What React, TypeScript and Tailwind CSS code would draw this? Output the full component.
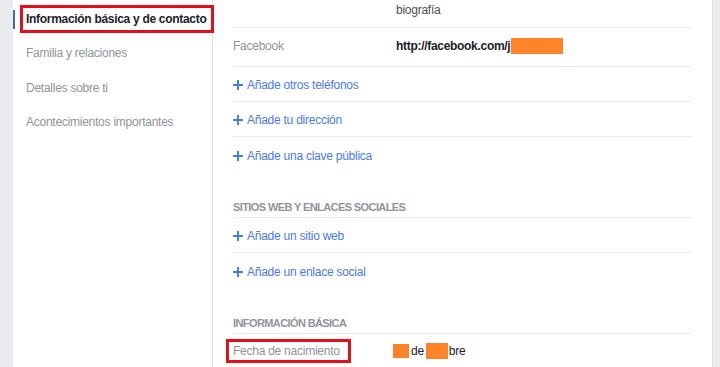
const font = { fontFamily: '"Liberation Sans", Arial, sans-serif' };

function Plus() {
  return (
    <svg width="10" height="10" viewBox="0 0 10 10" className="shrink-0">
      <rect x="4" y="0" width="2" height="10" fill="#4b7be5" />
      <rect x="0" y="4" width="10" height="2" fill="#4b7be5" />
    </svg>
  );
}

function AddRow({ label, last }: { label: string; last?: boolean }) {
  return (
    <div className={`h-[35px] pt-[2px] flex items-center gap-[4px] ${last ? "" : "border-b border-[#e9ebee]"}`}>
      <Plus />
      <span className="text-[12px] tracking-[-0.25px] text-[#4b7be5]">{label}</span>
    </div>
  );
}

function Header({ label }: { label: string }) {
  return (
    <div className="pt-[28px] pb-[3px] border-b border-[#e9ebee]">
      <div className="text-[11px] leading-[14px] font-bold tracking-[-0.6px] text-[#90949c] uppercase">{label}</div>
    </div>
  );
}

const Hidden = ({ w }: { w: number }) =>
  w === 16 ? (
    <span className="inline-block w-[16px] h-[14px] bg-[#ff8429] align-middle" />
  ) : w === 22 ? (
    <span className="inline-block w-[22px] h-[16px] bg-[#ff8429] align-middle" />
  ) : (
    <span className="inline-block w-[52px] h-[16px] bg-[#ff8429] align-middle ml-[1px]" />
  );

export default function App() {
  const items = ["Familia y relaciones", "Detalles sobre ti", "Acontecimientos importantes"];

  return (
    <div className="w-[720px] h-[367px] bg-[#e9ebee] flex overflow-hidden" style={font}>
      <div className="w-[13px] shrink-0" />
      <div className="w-[700px] shrink-0 bg-white flex border-r border-[#dddfe2]">
        {/* Sidebar */}
        <div className="w-[200px] shrink-0 border-r border-[#dddfe2] pt-[2px]">
          <div className="relative h-[34px] flex items-center pl-[13px]">
            <div className="absolute left-0 top-[8px] w-[2px] h-[19px] bg-[#4267b2]" />
            <div className="absolute left-[7px] top-[3px] w-[194px] h-[28px] border-[3px] border-[#e3101a]" />
            <span className="text-[12px] font-bold tracking-[-0.3px] text-[#1d2129] whitespace-nowrap">
              Información básica y de contacto
            </span>
          </div>
          {items.map((t) => (
            <div key={t} className="h-[34.5px] flex items-center pl-[13px] text-[12px] tracking-[-0.25px] text-[#90949c]">
              {t}
            </div>
          ))}
        </div>

        {/* Content */}
        <div className="flex-1 px-[20px] text-[12px] tracking-[-0.25px]">
          <div className="h-[28px] flex border-b border-[#e9ebee]">
            <div className="w-[163px]" />
            <span className="pt-[2px] leading-[16px] text-[#4b4f56]">biografía</span>
          </div>
          <div className="h-[39px] pb-[2px] flex items-center border-b border-[#e9ebee]">
            <div className="w-[163px] text-[#90949c]">Facebook</div>
            <div className="flex items-center font-bold tracking-[-0.3px] text-[#1d2129]">
              http://facebook.com/j
              <Hidden w={50} />
            </div>
          </div>
          <AddRow label="Añade otros teléfonos" />
          <AddRow label="Añade tu dirección" />
          <AddRow label="Añade una clave pública" last />

          <Header label="Sitios web y enlaces sociales" />
          <AddRow label="Añade un sitio web" />
          <AddRow label="Añade un enlace social" last />

          <Header label="Información básica" />
          <div className="h-[34px] flex items-center">
            <div className="w-[160px]">
              <span className="relative text-[#90949c]">
                Fecha de nacimiento
                <span className="absolute -left-[7px] -right-[11px] -top-[5px] -bottom-[5px] border-[3px] border-[#e3101a]" />
              </span>
            </div>
            <div className="flex items-center text-[#1d2129]">
              <Hidden w={16} />
              <span className="mx-[2px]">de</span>
              <Hidden w={22} />
              <span className="ml-[1px]">bre</span>
            </div>
          </div>
        </div>
      </div>
    </div>
  );
}
